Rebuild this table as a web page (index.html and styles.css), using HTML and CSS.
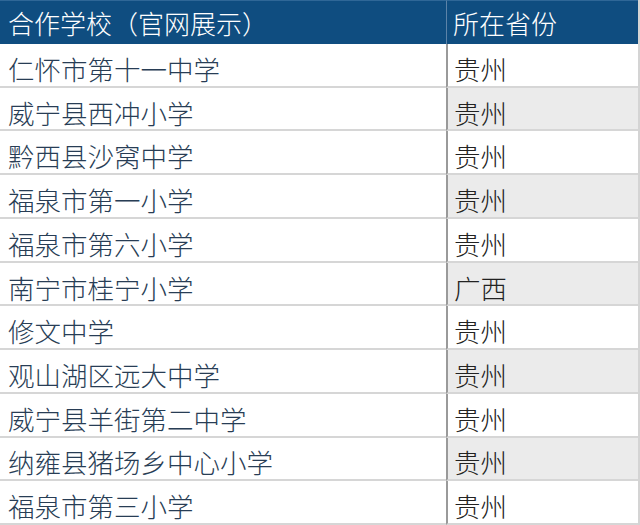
FILE: index.html
```html
<!DOCTYPE html>
<html lang="zh-CN">
<head>
<meta charset="utf-8">
<link rel="stylesheet" href="styles.css">
</head>
<body>
<div class="table">
  <div class="cell head name">合作学校（官网展示）</div>
  <div class="cell head prov">所在省份</div>

  <div class="cell name">仁怀市第十一中学</div><div class="cell prov">贵州</div>
  <div class="cell name">威宁县西冲小学</div><div class="cell prov alt">贵州</div>
  <div class="cell name">黔西县沙窝中学</div><div class="cell prov">贵州</div>
  <div class="cell name">福泉市第一小学</div><div class="cell prov alt">贵州</div>
  <div class="cell name">福泉市第六小学</div><div class="cell prov">贵州</div>
  <div class="cell name">南宁市桂宁小学</div><div class="cell prov alt">广西</div>
  <div class="cell name">修文中学</div><div class="cell prov">贵州</div>
  <div class="cell name">观山湖区远大中学</div><div class="cell prov alt">贵州</div>
  <div class="cell name">威宁县羊街第二中学</div><div class="cell prov">贵州</div>
  <div class="cell name">纳雍县猪场乡中心小学</div><div class="cell prov alt">贵州</div>
  <div class="cell name">福泉市第三小学</div><div class="cell prov">贵州</div>
</div>
</body>
</html>
```
FILE: styles.css
```css
html, body {
  margin: 0;
  padding: 0;
  background: #ffffff;
}
.table {
  width: 638px;
  height: 525px;
  display: grid;
  grid-template-columns: 446px 1fr;
  grid-template-rows: 44px repeat(11, 1fr);
  border-right: 2px solid #d4d4d4;
  font-family: "Noto Sans CJK SC", "Noto Sans", sans-serif;
  font-size: 26.5px;
  font-weight: 300;
  overflow: hidden;
}
.cell {
  display: flex;
  align-items: flex-end;
  padding-bottom: 1px;
  border-bottom: 2px solid #d6d6d6;
  line-height: 1.2;
  white-space: nowrap;
  box-sizing: border-box;
}
.name {
  padding-left: 8px;
  color: #283d55;
  background: #ffffff;
}
.prov {
  padding-left: 6px;
  color: #222222;
  border-left: 2px solid #9a9a9a;
  background: #ffffff;
}
.prov.alt {
  background: #ebebeb;
}
.head {
  background: #0f4d80;
  color: #ffffff;
  font-size: 26px;
  border-bottom: none;
  border-top: 1px solid #2f6797;
  align-items: center;
  padding-bottom: 0;
}
.head.prov {
  border-left: 1px solid #5c83a8;
}
```
